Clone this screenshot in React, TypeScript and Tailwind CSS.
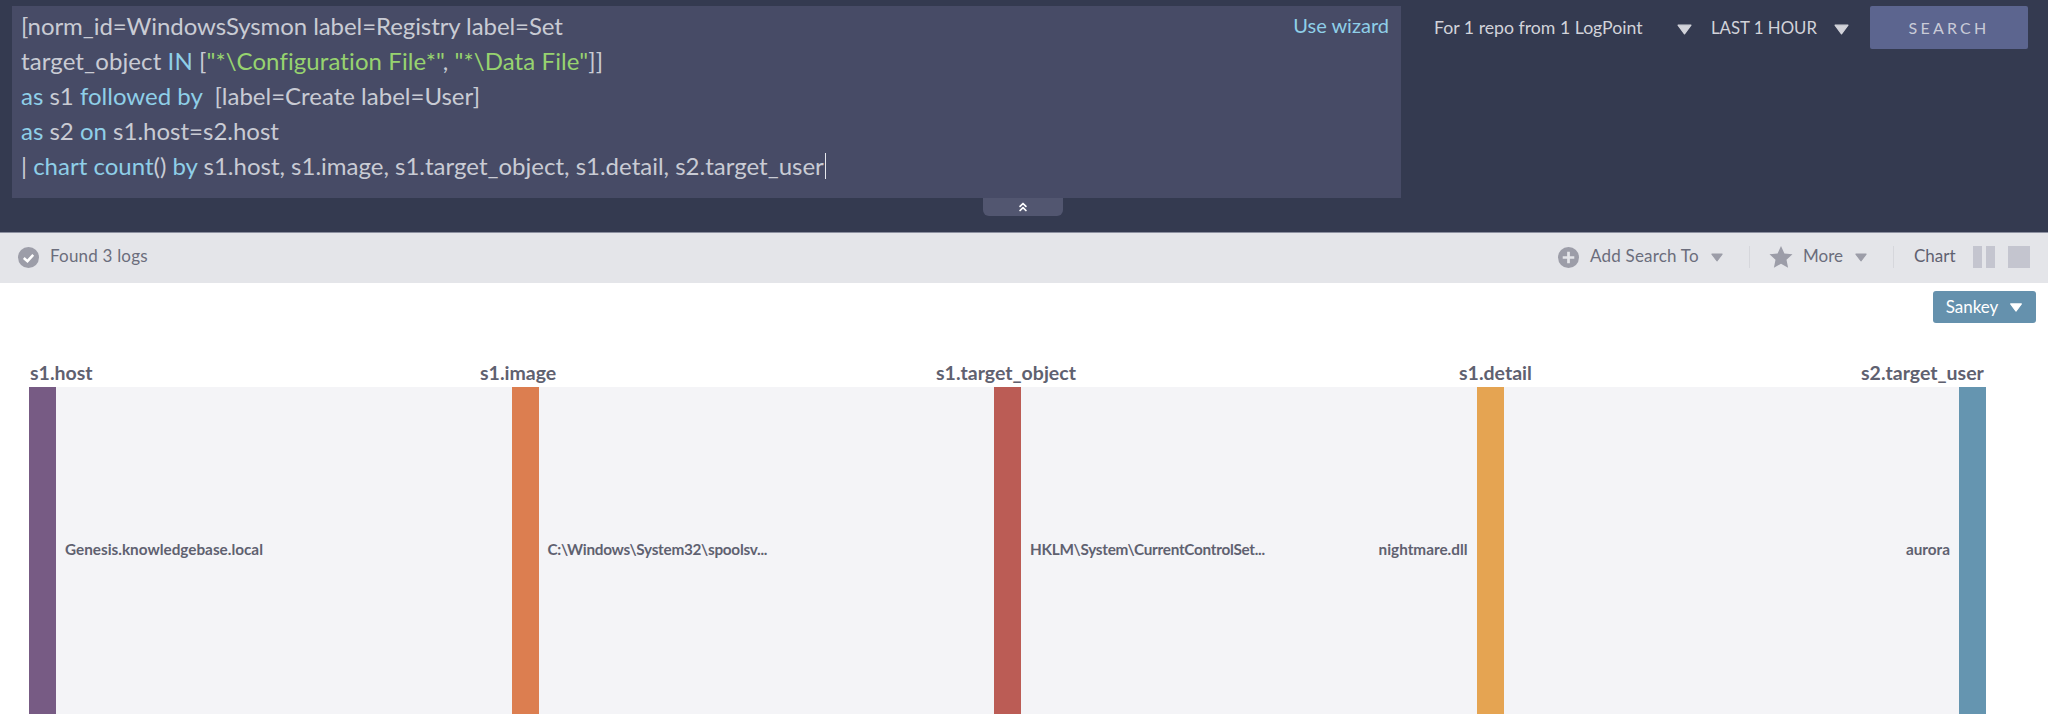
import { ChevronsUp } from "lucide-react";

const FONT = "font-['Lato','Open_Sans',sans-serif]";

function Caret({ className }: { className: string }) {
  return (
    <svg viewBox="0 0 14 10" className={className} fill="currentColor" aria-hidden>
      <path d="M1 1 H13 L7 9 Z" stroke="currentColor" strokeWidth="1.2" strokeLinejoin="round" />
    </svg>
  );
}

function QueryEditor() {
  const kw = "text-[#8fcfe8]";
  const str = "text-[#97d36f]";
  return (
    <div className="relative ml-3 mt-[6px] h-[192px] w-[1389px] bg-[#474b66] pl-[9px] pt-[2px] text-[24px] leading-[35px] text-[#c9cbd4]">
      <a className="absolute right-3 top-[2px] text-[20px] text-[#8fcfe8]">Use wizard</a>
      <div className="tracking-[-0.08px]">[norm_id=WindowsSysmon label=Registry label=Set</div>
      <div className="tracking-[0.1px]">
        target_object <span className={kw}>IN</span> [<span className={str}>"*\Configuration File*"</span>,{" "}
        <span className={str}>"*\Data File"</span>]]
      </div>
      <div>
        <span className={kw}>as</span> s1 <span className={kw}>followed by</span>&nbsp; [label=Create label=User]
      </div>
      <div>
        <span className={kw}>as</span> s2 <span className={kw}>on</span> s1.host=s2.host
      </div>
      <div className="flex items-center">
        <span>
          | <span className={kw}>chart count</span>() <span className={kw}>by</span> s1.host, s1.image,
          s1.target_object, s1.detail, s2.target_user
        </span>
        <span className="ml-px h-[26px] w-px bg-[#e6e7ec]" />
      </div>
    </div>
  );
}

function Header() {
  return (
    <header className="flex h-[233px] items-start border-b border-[#8c90a0] bg-[#343a50]">
      <div>
        <QueryEditor />
        <div className="ml-[983px] flex h-[18px] w-[80px] items-center justify-center rounded-b-md bg-[#525670] text-white">
          <ChevronsUp size={14} strokeWidth={3} />
        </div>
      </div>
      <div className="ml-[33px] mt-[6px] flex items-center text-[#d2d3da]">
        <span className="w-[208px] whitespace-nowrap pt-[1px] text-[17.7px]">For 1 repo from 1 LogPoint</span>
        <Caret className="ml-[35px] mt-[3px] h-[11px] w-[15px] text-[#d2d3da]" />
        <span className="ml-[19px] w-[106px] whitespace-nowrap pt-[1px] text-[16.8px]">LAST 1 HOUR</span>
        <Caret className="ml-[17px] mt-[3px] h-[11px] w-[15px] text-[#d2d3da]" />
        <button
          type="button"
          className="ml-[21px] h-[43px] w-[158px] rounded-[2px] bg-[#5c658f] text-[16px] tracking-[0.2em] text-[#c9cbd8]"
        >
          SEARCH
        </button>
      </div>
    </header>
  );
}

function Toolbar() {
  return (
    <div className="flex h-[50px] items-center bg-[#e4e5e9] pb-[2px] text-[17px] text-[#6b6d7c]">
      <svg viewBox="0 0 20 20" className="ml-[18px] h-[21px] w-[21px]" aria-hidden>
        <circle cx="10" cy="10" r="10" fill="#9c9da8" />
        <path d="M5.5 10.5 L9 13.5 L14.5 7.5" fill="none" stroke="#fff" strokeWidth="2.4" />
      </svg>
      <span className="ml-[11px] pb-[3px] tracking-[0.2px]">Found 3 logs</span>

      <svg viewBox="0 0 20 20" className="ml-auto h-[21px] w-[21px]" aria-hidden>
        <circle cx="10" cy="10" r="10" fill="#9c9da8" />
        <path d="M10 4.5 V15.5 M4.5 10 H15.5" fill="none" stroke="#e4e5e9" strokeWidth="2.6" />
      </svg>
      <span className="ml-[11px] w-[109px] whitespace-nowrap pb-[3px] tracking-[0.2px]">Add Search To</span>
      <Caret className="ml-[12px] h-[9px] w-[12px] text-[#9c9da8]" />
      <span className="ml-[26px] h-[22px] w-px bg-[#d6d7dc]" />
      <svg viewBox="0 0 24 24" className="ml-[19px] h-[24px] w-[24px]" aria-hidden>
        <path d="M12 1 L15.4 8.4 L23.5 9.3 L17.5 14.8 L19.1 22.8 L12 18.8 L4.9 22.8 L6.5 14.8 L0.5 9.3 L8.6 8.4 Z" fill="#9c9da8" />
      </svg>
      <span className="ml-[10px] w-[38px] pb-[3px]">More</span>
      <Caret className="ml-[14px] h-[9px] w-[12px] text-[#9c9da8]" />
      <span className="ml-[26px] h-[22px] w-px bg-[#d6d7dc]" />
      <span className="ml-[20px] w-[44px] pb-[3px] text-[#5f6170]">Chart</span>
      <span className="ml-[15px] flex h-[22px] w-[22px] justify-between">
        <span className="w-[9px] bg-[#c4c5cf]" />
        <span className="w-[9px] bg-[#c4c5cf]" />
      </span>
      <span className="ml-[13px] mr-[18px] h-[22px] w-[22px] bg-[#c4c5cf]" />
    </div>
  );
}

const TITLES = [
  { name: "s1.host", width: "w-[450px]" },
  { name: "s1.image", width: "w-[456px]" },
  { name: "s1.target_object", width: "w-[523px]" },
  { name: "s1.detail", width: "w-[402px]" },
  { name: "s2.target_user", width: "w-[125px]" },
];

function Bar({ className }: { className: string }) {
  return <div className={`w-[27px] shrink-0 ${className}`} />;
}

function Band({ left, right, tight }: { left?: string; right?: string; tight?: boolean }) {
  return (
    <div className="flex flex-1 items-center justify-between px-[9px] pb-[2px] text-[15.3px] font-bold text-[#5f6170]">
      <span className={tight ? "tracking-[-0.27px]" : ""}>{left}</span>
      <span>{right}</span>
    </div>
  );
}

function Sankey() {
  return (
    <div className="bg-white pl-[29px] pr-[62px]">
      <div className="flex h-[49px] items-center justify-end">
        <button
          type="button"
          className="-mr-[50px] mt-[-1px] flex h-[32px] w-[103px] items-center justify-center gap-[11px] rounded-[3px] bg-[#6591ad] text-[17px] text-white"
        >
          Sankey
          <Caret className="h-[9px] w-[14px] text-white" />
        </button>
      </div>
      <div className="flex h-[55px] items-end pb-[1px] pl-px text-[19.5px] font-bold leading-[26px] text-[#5f6170]">
        {TITLES.map((t) => (
          <span key={t.name} className={`${t.width} shrink-0 whitespace-nowrap`}>
            {t.name}
          </span>
        ))}
      </div>
      <div className="flex h-[327px] bg-[#f4f4f7]">
        <Bar className="bg-[#775b84]" />
        <Band left="Genesis.knowledgebase.local" />
        <Bar className="bg-[#dc7e50]" />
        <Band left="C:\Windows\System32\spoolsv..." tight />
        <Bar className="bg-[#bb5c55]" />
        <Band left="HKLM\System\CurrentControlSet..." right="nightmare.dll" tight />
        <Bar className="bg-[#e5a452]" />
        <Band right="aurora" />
        <Bar className="bg-[#6595b0]" />
      </div>
    </div>
  );
}

export default function App() {
  return (
    <div className={`h-[727px] overflow-hidden bg-white ${FONT}`}>
      <Header />
      <Toolbar />
      <Sankey />
    </div>
  );
}
